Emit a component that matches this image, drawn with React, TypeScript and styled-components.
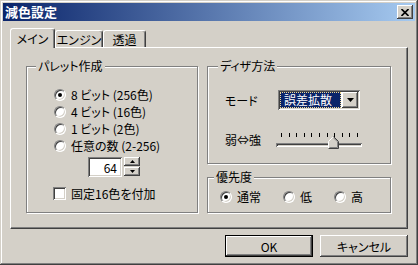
import React from "react";
import styled, { createGlobalStyle, css } from "styled-components";

const FACE = "#d4d0c8";
const SHADOW = "#808080";
const DARK = "#404040";
const HILITE = "#ffffff";

const GlobalStyle = createGlobalStyle`
  html, body { margin: 0; padding: 0; background: ${FACE}; }
  body {
    font-family: "Noto Sans CJK JP", "Noto Sans", sans-serif;
    font-size: 12px;
    color: #000;
    font-feature-settings: "palt";
  }
  * { box-sizing: border-box; }
`;

const raised = css`
  background: ${FACE};
  box-shadow: inset -1px -1px 0 ${DARK}, inset 1px 1px 0 ${HILITE},
    inset -2px -2px 0 ${SHADOW}, inset 2px 2px 0 ${FACE};
`;

const sunken = css`
  box-shadow: inset 1px 1px 0 ${SHADOW}, inset -1px -1px 0 ${HILITE},
    inset 2px 2px 0 ${DARK}, inset -2px -2px 0 ${FACE};
`;

const Window = styled.div`
  width: 418px;
  height: 265px;
  padding: 3px;
  background: ${FACE};
  box-shadow: inset -1px -1px 0 ${DARK}, inset 1px 1px 0 ${FACE},
    inset -2px -2px 0 ${SHADOW}, inset 2px 2px 0 ${HILITE};
  display: flex;
  flex-direction: column;
`;

const TitleBar = styled.div`
  height: 18px;
  background: linear-gradient(to right, #0a246a, #a6caf0);
  display: flex;
  align-items: center;
  justify-content: space-between;
  padding: 0 2px 0 2px;
`;

const Caption = styled.span`
  color: #fff;
  font-weight: bold;
  font-size: 13px;
  line-height: 18px;
`;

const CloseButton = styled.div`
  ${raised};
  width: 16px;
  height: 14px;
  display: flex;
  align-items: center;
  justify-content: center;
`;

const Body = styled.div`
  padding: 7px 7px 0 7px;
  display: flex;
  flex-direction: column;
`;

const TabStrip = styled.div`
  height: 19px;
  display: flex;
  align-items: flex-end;
`;

const Tab = styled.div<{ $active?: boolean; $width: number }>`
  width: ${(p) => p.$width}px;
  height: ${(p) => (p.$active ? 20 : 17)}px;
  margin-bottom: ${(p) => (p.$active ? -1 : 0)}px;
  padding-top: ${(p) => (p.$active ? 0 : 1)}px;
  background: ${FACE};
  border-top: 1px solid ${HILITE};
  border-left: 1px solid ${HILITE};
  border-right: 1px solid ${DARK};
  box-shadow: inset -1px 0 0 ${SHADOW};
  border-radius: 3px 3px 0 0;
  display: flex;
  align-items: center;
  justify-content: center;
  position: relative;
  z-index: ${(p) => (p.$active ? 1 : 0)};
`;

const Panel = styled.div`
  height: 182px;
  border-top: 1px solid ${HILITE};
  border-left: 1px solid ${HILITE};
  border-right: 1px solid ${DARK};
  border-bottom: 1px solid ${DARK};
  box-shadow: inset -1px -1px 0 ${SHADOW};
  padding: 18px 0 0 15px;
  display: flex;
  gap: 9px;
`;

const Column = styled.div`
  display: flex;
  flex-direction: column;
  gap: 13px;
`;

const Group = styled.div<{ $width: number; $height: number }>`
  width: ${(p) => p.$width}px;
  height: ${(p) => p.$height}px;
  border: 1px solid ${SHADOW};
  box-shadow: inset 1px 1px 0 ${HILITE}, 1px 1px 0 ${HILITE};
  display: flex;
  flex-direction: column;
`;

const GroupTitle = styled.div<{ $indent?: number }>`
  margin: -8px 0 0 ${(p) => p.$indent ?? 9}px;
  padding: 0 2px;
  line-height: 14px;
  background: ${FACE};
  align-self: flex-start;
`;

const OptionList = styled.div`
  margin: 13px 0 0 27px;
  display: flex;
  flex-direction: column;
`;

const OptionLabel = styled.label`
  height: 17px;
  display: flex;
  align-items: center;
  gap: 5px;
  white-space: nowrap;
`;

const RadioDot = styled.span<{ $on?: boolean }>`
  width: 12px;
  height: 12px;
  border-radius: 50%;
  background: #fff;
  border: 1px solid;
  border-color: ${SHADOW} ${HILITE} ${HILITE} ${SHADOW};
  box-shadow: inset 1px 1px 0 ${DARK}, inset -1px -1px 0 ${FACE};
  display: flex;
  align-items: center;
  justify-content: center;
  flex: none;
  &::after {
    content: "";
    width: 4px;
    height: 4px;
    border-radius: 50%;
    background: ${(p) => (p.$on ? "#000" : "transparent")};
  }
`;

const CheckBox = styled.span`
  width: 13px;
  height: 13px;
  background: #fff;
  ${sunken};
  flex: none;
`;

const SpinRow = styled.div`
  margin: 3px 0 0 61px;
  display: flex;
  gap: 2px;
`;

const NumberField = styled.div`
  width: 34px;
  height: 20px;
  background: #fff;
  ${sunken};
  padding: 0 5px;
  display: flex;
  align-items: center;
  justify-content: flex-end;
`;

const Spinner = styled.div`
  display: flex;
  flex-direction: column;
  gap: 1px;
`;

const SpinButton = styled.div`
  ${raised};
  width: 16px;
  height: 9px;
  display: flex;
  align-items: center;
  justify-content: center;
`;

const CheckRow = styled(OptionLabel)`
  margin: 8px 0 0 26px;
`;

const FieldRow = styled.div<{ $top: number }>`
  margin: ${(p) => p.$top}px 0 0 17px;
  display: flex;
  align-items: center;
`;

const FieldLabel = styled.span`
  width: 53px;
  flex: none;
`;

const Combo = styled.div`
  width: 82px;
  height: 20px;
  background: #fff;
  ${sunken};
  padding: 2px;
  display: flex;
  gap: 1px;
`;

const ComboValue = styled.div`
  flex: 1;
  background: #0a246a;
  color: #fff;
  border: 1px dotted #f0d890;
  line-height: 14px;
  padding-left: 3px;
  font-size: 12px;
`;

const ComboButton = styled.div`
  ${raised};
  width: 16px;
  display: flex;
  align-items: center;
  justify-content: center;
`;

const Slider = styled.div`
  width: 86px;
  margin-left: -2px;
  display: flex;
  flex-direction: column;
`;

const Ticks = styled.div`
  height: 4px;
  padding: 0 4px 0 5px;
  display: flex;
  justify-content: space-between;
`;

const Tick = styled.span`
  width: 1px;
  height: 4px;
  background: #000;
`;

const Track = styled.div`
  position: relative;
  margin-top: 6px;
  height: 4px;
  box-shadow: inset 1px 1px 0 ${SHADOW}, inset -1px -1px 0 ${HILITE},
    inset 2px 2px 0 ${DARK}, inset -2px -2px 0 ${FACE};
`;

const Thumb = styled.svg`
  position: absolute;
  top: -7px;
  margin-left: -6px;
`;

const PriorityRow = styled.div`
  margin: 4px 0 0 12px;
  display: flex;
  gap: 22px;
`;

const ButtonRow = styled.div`
  margin-top: 6px;
  display: flex;
  justify-content: flex-end;
  gap: 7px;
`;

const PushButton = styled.button<{ $default?: boolean }>`
  ${raised};
  width: 88px;
  height: 22px;
  border: ${(p) => (p.$default ? "1px solid #000" : "none")};
  padding: 0;
  font: inherit;
  color: #000;
`;

const Arrow = ({ up, size = 7 }: { up?: boolean; size?: number }) => (
  <svg width={size} height={Math.ceil(size / 2)} viewBox={`0 0 ${size} ${Math.ceil(size / 2)}`}>
    <path
      d={
        up
          ? `M${size / 2} 0 L${size} ${Math.ceil(size / 2)} L0 ${Math.ceil(size / 2)} Z`
          : `M0 0 L${size} 0 L${size / 2} ${Math.ceil(size / 2)} Z`
      }
      fill="#000"
    />
  </svg>
);

const Radio = ({ label, on }: { label: string; on?: boolean }) => (
  <OptionLabel>
    <RadioDot $on={on} />
    {label}
  </OptionLabel>
);

const paletteOptions = ["8 ビット (256色)", "4 ビット (16色)", "1 ビット (2色)", "任意の数 (2-256)"];
const tickCount = 11;
const strength = 7;

export default function App() {
  return (
    <>
      <GlobalStyle />
      <Window>
        <TitleBar>
          <Caption>減色設定</Caption>
          <CloseButton>
            <svg width="8" height="7" viewBox="0 0 8 7">
              <path d="M0.5 0 L7.5 7 M7.5 0 L0.5 7" stroke="#000" strokeWidth="1.6" />
            </svg>
          </CloseButton>
        </TitleBar>
        <Body>
          <TabStrip>
            <Tab $active $width={45}>メイン</Tab>
            <Tab $width={48}>エンジン</Tab>
            <Tab $width={43}>透過</Tab>
          </TabStrip>
          <Panel>
            <Group $width={172} $height={147}>
              <GroupTitle>パレット作成</GroupTitle>
              <OptionList>
                {paletteOptions.map((o, i) => (
                  <Radio key={o} label={o} on={i === 0} />
                ))}
              </OptionList>
              <SpinRow>
                <NumberField>64</NumberField>
                <Spinner>
                  <SpinButton>
                    <Arrow up size={5} />
                  </SpinButton>
                  <SpinButton>
                    <Arrow size={5} />
                  </SpinButton>
                </Spinner>
              </SpinRow>
              <CheckRow>
                <CheckBox />
                固定16色を付加
              </CheckRow>
            </Group>
            <Column>
              <Group $width={184} $height={98}>
                <GroupTitle $indent={10}>ディザ方法</GroupTitle>
                <FieldRow $top={17}>
                  <FieldLabel>モード</FieldLabel>
                  <Combo>
                    <ComboValue>誤差拡散</ComboValue>
                    <ComboButton>
                      <Arrow size={7} />
                    </ComboButton>
                  </Combo>
                </FieldRow>
                <FieldRow $top={21}>
                  <FieldLabel>弱⇔強</FieldLabel>
                  <Slider>
                    <Ticks>
                      {Array.from({ length: tickCount }, (_, i) => (
                        <Tick key={i} />
                      ))}
                    </Ticks>
                    <Track>
                      <Thumb
                        width="11"
                        height="13"
                        viewBox="0 0 11 13"
                        style={{ left: `calc(5px + (100% - 10px) * ${strength / (tickCount - 1)})` }}
                      >
                        <path d="M0.5 12.5 V5.5 L5.5 0.5 L10.5 5.5 V12.5 Z" fill={FACE} />
                        <path d="M0.5 12.5 V5.5 L5.5 0.5" fill="none" stroke={HILITE} />
                        <path d="M5.5 0.5 L10.5 5.5 V12.5 H0.5" fill="none" stroke={DARK} />
                        <path d="M5.5 1.8 L9.5 5.8 V11.5 H1.5" fill="none" stroke={SHADOW} />
                      </Thumb>
                    </Track>
                  </Slider>
                </FieldRow>
              </Group>
              <Group $width={184} $height={36}>
                <GroupTitle $indent={6}>優先度</GroupTitle>
                <PriorityRow>
                  <Radio label="通常" on />
                  <Radio label="低" />
                  <Radio label="高" />
                </PriorityRow>
              </Group>
            </Column>
          </Panel>
          <ButtonRow>
            <PushButton $default>OK</PushButton>
            <PushButton>キャンセル</PushButton>
          </ButtonRow>
        </Body>
      </Window>
    </>
  );
}
